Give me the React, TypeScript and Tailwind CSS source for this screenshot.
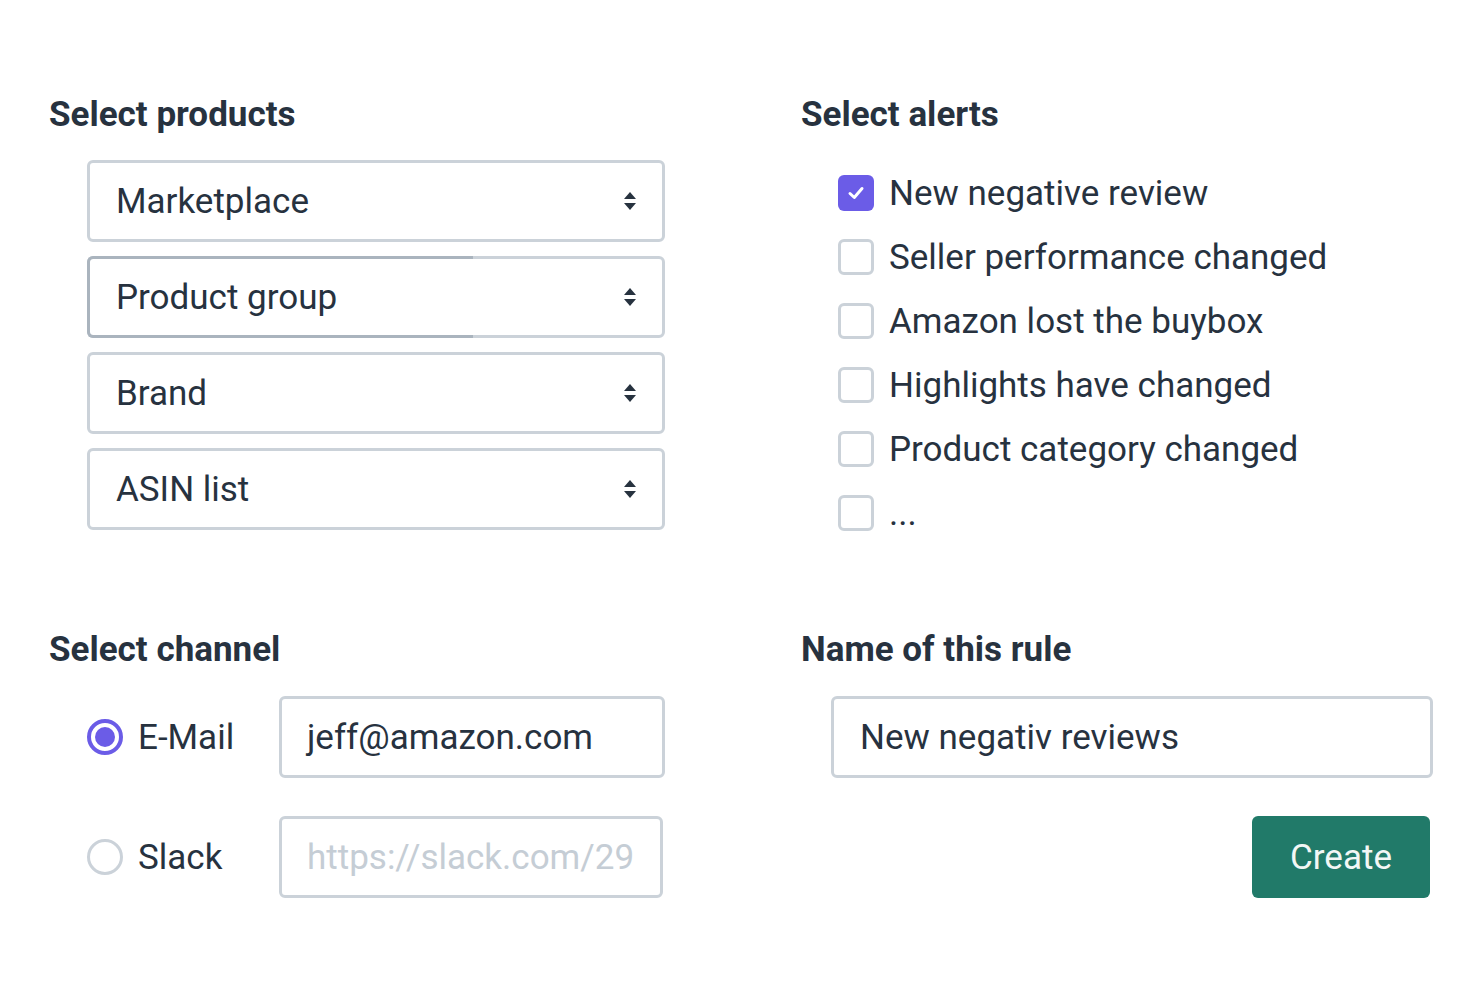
import React from "react";

const Chevron = () => (
  <svg width="14" height="22" viewBox="0 0 14 22" className="shrink-0">
    <path d="M7 2 L13 9 L1 9 Z" fill="#27323f" />
    <path d="M7 20 L13 13 L1 13 Z" fill="#27323f" />
  </svg>
);

function Select({ label, shaded }: { label: string; shaded?: boolean }) {
  return (
    <div className="relative flex h-[82px] w-[578px] items-center rounded-[6px] border-[3px] border-[#cbd2d9] pl-[26px] pr-[25px] text-[35px] text-[#27323f]">
      {shaded && (
        <div className="pointer-events-none absolute -left-[3px] -top-[3px] -bottom-[3px] w-[386px] rounded-l-[6px] border-y-[3px] border-l-[3px] border-[#aab4be]" />
      )}
      <span className="flex-1 pt-[2px]">{label}</span>
      <Chevron />
    </div>
  );
}

function Check({ label, checked }: { label: string; checked?: boolean }) {
  return (
    <div className="flex h-[64px] items-center gap-[15px]">
      {checked ? (
        <div className="flex h-[36px] w-[36px] items-center justify-center rounded-[6px] bg-[#6b5ce7]">
          <svg width="20" height="20" viewBox="0 0 20 20">
            <path d="M4 10.5 L8.3 14.5 L16 5.5" stroke="#fff" strokeWidth="3" fill="none" strokeLinecap="round" strokeLinejoin="round" />
          </svg>
        </div>
      ) : (
        <div className="h-[36px] w-[36px] rounded-[6px] border-[3px] border-[#cbd2d9]" />
      )}
      <span className="pt-[2px] text-[35px] text-[#27323f]">{label}</span>
    </div>
  );
}

function Radio({ checked }: { checked?: boolean }) {
  return checked ? (
    <div className="flex h-[36px] w-[36px] items-center justify-center rounded-full border-[4px] border-[#6b5ce7]">
      <div className="h-[20px] w-[20px] rounded-full bg-[#6b5ce7]" />
    </div>
  ) : (
    <div className="h-[36px] w-[36px] rounded-full border-[3px] border-[#cbd2d9]" />
  );
}

export default function App() {
  return (
    <div className="h-[994px] w-[1480px] bg-white font-['Roboto','Liberation_Sans',sans-serif] text-[#27323f]">
      <div className="grid grid-cols-[752px_1fr] pl-[49px] pt-[95px]">
        <div>
          <h2 className="text-[35px] font-bold leading-[40px] text-[#27323f]">Select products</h2>
          <div className="ml-[38px] mt-[25px] flex flex-col gap-[14px]">
            <Select label="Marketplace" />
            <Select label="Product group" shaded />
            <Select label="Brand" />
            <Select label="ASIN list" />
          </div>
        </div>
        <div>
          <h2 className="text-[35px] font-bold leading-[40px] text-[#27323f]">Select alerts</h2>
          <div className="ml-[37px] mt-[26px] flex flex-col">
            <Check label="New negative review" checked />
            <Check label="Seller performance changed" />
            <Check label="Amazon lost the buybox" />
            <Check label="Highlights have changed" />
            <Check label="Product category changed" />
            <Check label="..." />
          </div>
        </div>
      </div>

      <div className="mt-[85px] grid grid-cols-[752px_1fr] pl-[49px]">
        <div>
          <h2 className="text-[35px] font-bold leading-[40px] text-[#27323f]">Select channel</h2>
          <div className="ml-[38px] mt-[26px] flex flex-col gap-[38px]">
            <div className="flex items-center">
              <Radio checked />
              <span className="ml-[15px] w-[141px] pt-[2px] text-[35px]">E-Mail</span>
              <div className="flex h-[82px] w-[386px] items-center rounded-[6px] border-[3px] border-[#cbd2d9] pl-[25px] pt-[2px] text-[35px] text-[#27323f]">
                jeff@amazon.com
              </div>
            </div>
            <div className="flex items-center">
              <Radio />
              <span className="ml-[15px] w-[141px] pt-[2px] text-[35px]">Slack</span>
              <div className="flex h-[82px] w-[384px] items-center overflow-hidden whitespace-nowrap rounded-[6px] border-[3px] border-[#cbd2d9] pl-[25px] pt-[2px] text-[35px] text-[#c5cdd5]">
                https://slack.com/29
              </div>
            </div>
          </div>
        </div>
        <div>
          <h2 className="text-[35px] font-bold leading-[40px] text-[#27323f]">Name of this rule</h2>
          <div className="ml-[30px] mt-[26px] flex w-[602px] flex-col">
            <div className="flex h-[82px] w-[602px] items-center rounded-[6px] border-[3px] border-[#cbd2d9] pl-[26px] pt-[2px] text-[35px] text-[#27323f]">
              New negativ reviews
            </div>
            <div className="mt-[38px] flex justify-end pr-[3px]">
              <button className="flex h-[82px] w-[178px] items-center justify-center rounded-[6px] bg-[#217a69] pt-[2px] text-[35px] text-[#f2f7f5]">
                Create
              </button>
            </div>
          </div>
        </div>
      </div>
    </div>
  );
}
